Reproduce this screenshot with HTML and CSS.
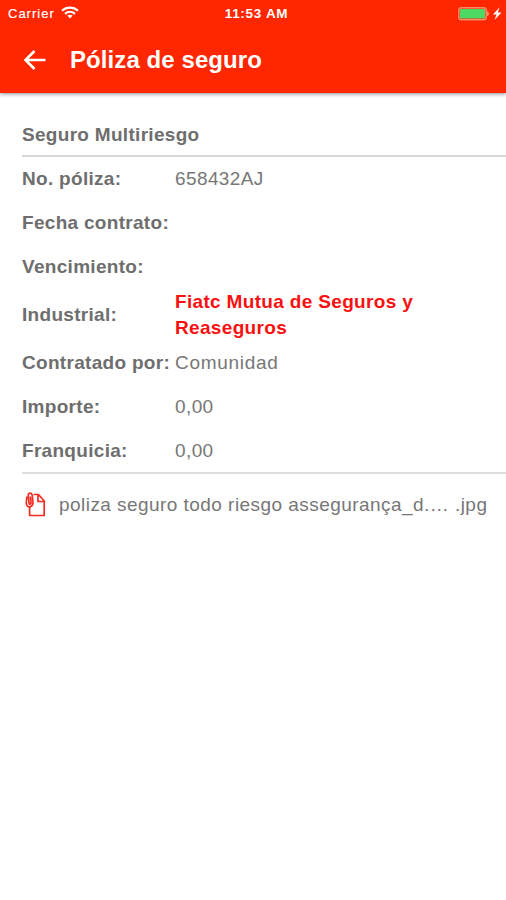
FILE: index.html
```html
<!DOCTYPE html>
<html lang="es">
<head>
<meta charset="utf-8">
<title>Póliza de seguro</title>
<link rel="stylesheet" href="styles.css">
</head>
<body>
<header class="header">
  <div class="status">
    <div class="network">
      <span class="carrier">Carrier</span>
      <svg class="wifi" viewBox="0 0 18 13" width="18" height="13"><g fill="none" stroke="#fff" stroke-width="2.2"><path d="M1 4.7C5.5.5 12.500.5 17 4.700"/><path d="M4 7.800C7 5.200 11 5.200 14 7.800"/></g><path d="M6.300 9.600Q9 7.700 11.700 9.600L9 12.500Z" fill="#fff"/></svg>
    </div>
    <span class="time">11:53 AM</span>
    <div class="power">
      <svg viewBox="0 0 44 14" width="44" height="14"><rect x=".8" y=".8" width="27.400" height="12" rx="2.500" fill="none" stroke="#ff8a65" stroke-width="1.500"/><rect x="2" y="2" width="25" height="9.600" rx="1" fill="#4cd964"/><path d="M29.500 4.500Q32 6.800 29.500 9Z" fill="#ff8a65" stroke="#ff8a65"/><path d="M41.500.300L35 7.500H38.500L36.500 13L43.500 5.600H39.800Z" fill="#fff"/></svg>
    </div>
  </div>
  <div class="toolbar">
    <svg class="back" viewBox="0 0 24 22" width="24" height="22"><path d="M22.500 11H2.500M11.500 2L2.500 11L11.500 20" fill="none" stroke="#fff" stroke-width="2.600"/></svg>
    <h1 class="title">Póliza de seguro</h1>
  </div>
</header>
<main class="content">
  <h2 class="section">Seguro Multiriesgo</h2>
  <dl class="details">
    <div class="row"><dt>No. póliza:</dt><dd>658432AJ</dd></div>
    <div class="row"><dt>Fecha contrato:</dt><dd></dd></div>
    <div class="row"><dt>Vencimiento:</dt><dd></dd></div>
    <div class="row row-tall"><dt>Industrial:</dt><dd class="company">Fiatc Mutua de Seguros y<br>Reaseguros</dd></div>
    <div class="row"><dt>Contratado por:</dt><dd class="wide">Comunidad</dd></div>
    <div class="row"><dt>Importe:</dt><dd>0,00</dd></div>
    <div class="row"><dt>Franquicia:</dt><dd>0,00</dd></div>
  </dl>
  <div class="file">
    <svg class="attach" viewBox="0 0 22 26" width="22" height="26"><g fill="none" stroke="#f52c22" stroke-width="1.700" stroke-linejoin="round"><path d="M8.500 2.500H13.500L19.200 9V23.500H4.600V14.500"/><path d="M13 3V9.500H19"/><path d="M1.900 4.500L1.200 11Q1.600 15.500 5.100 14.700Q8 14 8 10.500L7.200 3Q6.400 .8 4.300 1.300Q2.900 2 3.300 4.300L4 11Q4.300 12.500 5.400 12Q6.200 11.500 6 10L5.400 4.500"/></g></svg>
    <span class="filename">poliza seguro todo riesgo assegurança_d.… .jpg</span>
  </div>
</main>
</body>
</html>
```
FILE: styles.css
```css
* { box-sizing: border-box; }
body {
  margin: 0;
  background: #fff;
  color: #6e6e6e;
  font-family: "Liberation Sans", Arial, sans-serif;
}
h1, h2, dl, dd { margin: 0; }
svg { display: block; flex: none; }
.header {
  height: 93px;
  background: #ff2600;
  color: #fff;
  box-shadow: 0 1px 4px rgba(0, 0, 0, .45);
}
.status {
  display: grid;
  grid-template-columns: 1fr auto 1fr;
  align-items: center;
  height: 27px;
  padding: 0 4px 0 8px;
}
.network { display: flex; align-items: center; gap: 6px; }
.carrier { font-size: 13px; letter-spacing: 1px; -webkit-text-stroke: .2px; }
.wifi { margin-top: -2px; }
.time {
  padding-left: 3px;
  font-size: 13.5px;
  font-weight: bold;
  letter-spacing: .7px;
}
.power { justify-self: end; }
.toolbar {
  display: flex;
  align-items: center;
  height: 66px;
  padding-left: 23px;
}
.title {
  margin-left: 23px;
  font-size: 24px;
  font-weight: bold;
  line-height: 30px;
  letter-spacing: .08px;
}
.content { padding: 22px 0 0 22px; }
.section {
  height: 42px;
  padding-top: 8px;
  border-bottom: 2px solid #d8d8d8;
  font-size: 19px;
  line-height: 24px;
  letter-spacing: .3px;
}
.details { border-bottom: 2px solid #dedede; }
.row {
  display: grid;
  grid-template-columns: 153px 1fr;
  align-items: center;
  height: 44px;
  font-size: 19px;
  line-height: 26px;
  white-space: nowrap;
}
.row:last-child { height: 43px; }
.row-tall { height: 52px; }
dt { font-weight: bold; letter-spacing: .3px; }
dd { color: #777; letter-spacing: .4px; }
.row .wide { letter-spacing: .7px; }
.row .company { color: #fa1010; font-weight: bold; letter-spacing: .33px; }
.file {
  display: flex;
  align-items: center;
  height: 62px;
  padding-left: 3px;
}
.filename {
  margin-left: 12px;
  color: #777;
  font-size: 19px;
  letter-spacing: .45px;
  white-space: nowrap;
}
```
